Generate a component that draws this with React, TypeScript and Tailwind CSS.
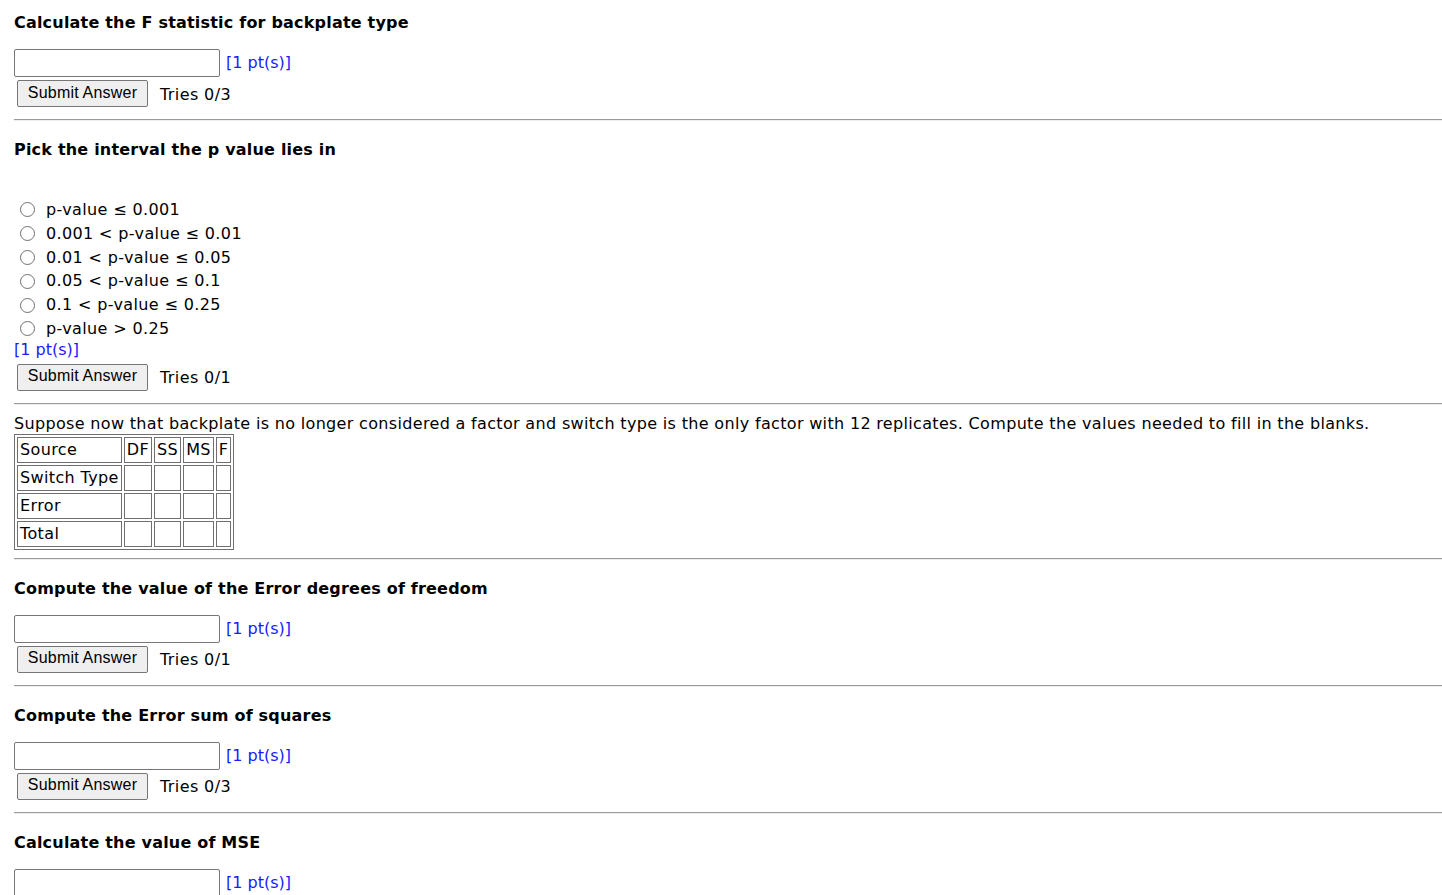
import React from "react";

const body = "font-['DejaVu_Sans',Verdana,sans-serif]";

function Hr() {
  return <hr className="border-0 border-t border-t-[#9a9a9a] border-b border-b-[#eeeeee] h-0 w-full" />;
}

function Heading({ children, top = "mt-[19px]" }: { children: React.ReactNode; top?: string }) {
  return <h3 className={`${top} text-[16px] leading-[20px] font-bold tracking-[0.2px] text-black`}>{children}</h3>;
}

function Pts() {
  return <span className="text-[#1a1aff] text-[16px] leading-[18px] tracking-normal">[1 pt(s)]</span>;
}

function SubmitRow({ tries }: { tries: string }) {
  return (
    <div className="mt-[3px] flex items-center h-[27px]">
      <button className="ml-[3px] h-[27px] w-[131px] bg-[#efefef] border border-[#767676] rounded-[2px] font-['Liberation_Sans',Arial,sans-serif] text-[16px] tracking-[0.2px] text-black leading-none pb-[2px]">
        Submit Answer
      </button>
      <span className="ml-[12px] text-[16px] tracking-[0.4px] mt-[2px]">{tries}</span>
    </div>
  );
}

function InputQuestion({ title, tries, first }: { title: string; tries: string; first?: boolean }) {
  return (
    <section>
      <Heading top={first ? "mt-[13px]" : "mt-[19px]"}>{title}</Heading>
      <div className="mt-[16px] flex items-center h-[28px]">
        <input
          type="text"
          aria-label={title}
          className="h-[28px] w-[206px] border border-[#767676] rounded-[2px] bg-white px-1"
        />
        <span className="ml-[6px]">
          <Pts />
        </span>
      </div>
      <SubmitRow tries={tries} />
      <div className="mt-[12px]">
        <Hr />
      </div>
    </section>
  );
}

const options = [
  "p-value ≤ 0.001",
  "0.001 < p-value ≤ 0.01",
  "0.01 < p-value ≤ 0.05",
  "0.05 < p-value ≤ 0.1",
  "0.1 < p-value ≤ 0.25",
  "p-value > 0.25",
];

function Cell({ children }: { children?: React.ReactNode }) {
  return (
    <td className="border border-[#707070] px-[2px] py-[1px] leading-[22px] h-[26px] min-w-[14px] text-[16px] tracking-[0.37px] whitespace-nowrap">
      {children}
    </td>
  );
}

export default function App() {
  return (
    <div className={`${body} bg-white text-black min-h-[895px] pl-[14px] overflow-hidden`}>
      <InputQuestion first title="Calculate the F statistic for backplate type" tries="Tries 0/3" />

      <section>
        <Heading>Pick the interval the p value lies in</Heading>
        <div className="mt-[38px] flex flex-col">
          {options.map((o) => (
            <label key={o} className="flex items-center h-[23.8px] text-[16px] tracking-[0.37px]">
              <input
                type="radio"
                name="pval"
                className="appearance-none ml-[6px] w-[15px] h-[15px] rounded-full border border-[#6f6f6f] bg-white"
              />
              <span className="ml-[11px]">{o}</span>
            </label>
          ))}
        </div>
        <div className="h-[18px] flex items-center">
          <Pts />
        </div>
        <div className="mt-[5px]">
          <SubmitRow tries="Tries 0/1" />
        </div>
        <div className="mt-[12px]">
          <Hr />
        </div>
      </section>

      <section>
        <p className="mt-[10px] text-[16px] leading-[18px] tracking-[0.33px]">
          Suppose now that backplate is no longer considered a factor and switch type is the only factor with 12 replicates. Compute the values needed to fill in the blanks.
        </p>
        <table className="mt-[1px] border border-[#707070] border-separate border-spacing-[2px]">
          <tbody>
            <tr>
              <Cell>Source</Cell>
              <Cell>DF</Cell>
              <Cell>SS</Cell>
              <Cell>MS</Cell>
              <Cell>F</Cell>
            </tr>
            {["Switch Type", "Error", "Total"].map((r) => (
              <tr key={r}>
                <Cell>{r}</Cell>
                <Cell />
                <Cell />
                <Cell />
                <Cell />
              </tr>
            ))}
          </tbody>
        </table>
        <div className="mt-[8px]">
          <Hr />
        </div>
      </section>

      <InputQuestion title="Compute the value of the Error degrees of freedom" tries="Tries 0/1" />
      <InputQuestion title="Compute the Error sum of squares" tries="Tries 0/3" />
      <InputQuestion title="Calculate the value of MSE" tries="Tries 0/3" />
    </div>
  );
}
